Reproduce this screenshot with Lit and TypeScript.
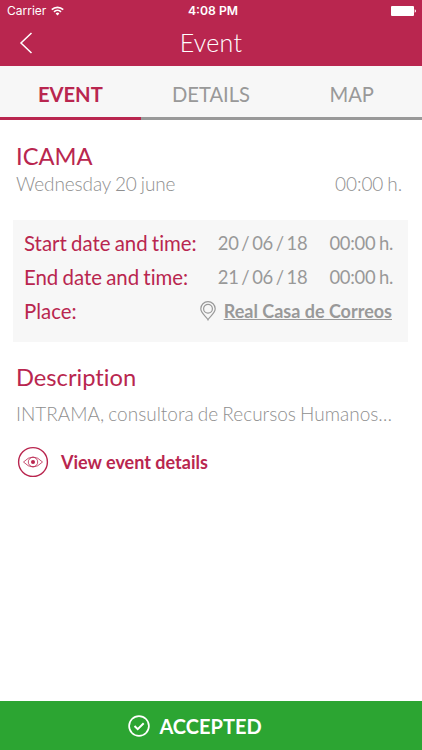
import { LitElement, html, css } from "lit";
import { customElement } from "lit/decorators.js";

@customElement("app-root")
export class AppRoot extends LitElement {
  static styles = css`
    :host { display: flex; flex-direction: column; height: 100vh; background: #fff; font-family: Lato, sans-serif; font-variant-ligatures: none; color: #8f8f8f; white-space: nowrap; overflow: hidden; }
    * { box-sizing: border-box; }
    svg { display: block; fill: none; stroke: currentColor; flex: none; }
    .status { height: 22px; background: #b9264f; color: #fff; display: grid; grid-template-columns: 1fr auto 1fr; align-items: center; padding: 0 6px 0 7px; font: 12px/22px Inter, sans-serif; }
    .carrier { display: flex; align-items: center; gap: 5px; }
    .clock { font-weight: 600; font-size: 12.2px; padding-left: 3px; }
    .battery { justify-self: end; }
    .nav { height: 44px; background: #b9264f; color: #fff; display: grid; grid-template-columns: 52px 1fr 52px; align-items: center; text-align: center; font-size: 25px; font-weight: 300; letter-spacing: 0.3px; padding-bottom: 2px; }
    .title { padding-bottom: 3px; }
    .back { padding-left: 19px; }
    .tabs { display: grid; grid-template: 54px / repeat(3, 1fr); height: 54px; background: #f7f7f7; }
    .tab { height: 54px; border-bottom: 3px solid #999; font-size: 20.2px; line-height: 56px; text-align: center; color: #999; }
    .tab.active { border-color: #b9264f; color: #b9264f; font-weight: 700; }
    .content { flex: 1; padding: 22px 13px 0; }
    h1, h2 { margin: 0 3px; color: #b9264f; font-size: 23.7px; font-weight: 400; line-height: 28px; }
    .sub { display: flex; justify-content: space-between; margin: 2px 7px 0 3px; font-size: 19px; font-weight: 300; line-height: 24px; word-spacing: -1px; letter-spacing: -0.1px; }
    .card { background: #f7f7f7; margin-top: 24px; padding: 6px 15px 0 11px; height: 122px; width: 395px; }
    .row { display: flex; height: 34px; align-items: center; font-size: 20.4px; line-height: 24px; color: #b9264f; word-spacing: -1px; }
    .label { padding-bottom: 1px; }
    .date, .time { font-size: 18.4px; color: #999; word-spacing: -1px; letter-spacing: -0.25px; }
    .date { margin-left: auto; word-spacing: -1.7px; }
    .time { margin-left: 22px; }
    .place { margin: 0 1px 0 auto; display: flex; align-items: center; gap: 8px; font-size: 18px; font-weight: 700; color: #999; word-spacing: 0; }
    .link { text-decoration: underline; }
    h2 { margin-top: 21px; }
    .text { margin: 11px 3px 0; font-size: 19px; font-weight: 300; line-height: 24px; word-spacing: -1px; }
    .details { display: flex; align-items: center; gap: 12px; margin: 20px 4px 0; color: #b9264f; font-size: 18px; font-weight: 700; }
    .accepted { height: 49px; background: #2ca532; color: #fff; display: flex; align-items: center; justify-content: center; gap: 9px; font-size: 20px; font-weight: 700; padding-right: 32px; }
  `;
  render() {
    return html`
      <div class="status">
        <div class="carrier">Carrier
          <svg width="13" height="10" viewBox="0 0 13 10" stroke-width="1.7"><path d="M.8 3.6a8.2 8.2 0 0 1 11.4 0M3 5.9a5 5 0 0 1 7 0"/><path d="M6.5 9.4 4.6 7.5a2.8 2.8 0 0 1 3.8 0z" fill="currentColor" stroke="none"/></svg>
        </div>
        <div class="clock">4:08 PM</div>
        <svg class="battery" width="25" height="10" viewBox="0 0 25 10"><path d="M1 0h21q1 0 1 1v8q0 1-1 1H1q-1 0-1-1V1q0-1 1-1zM23.7 3.3q1.3.5 1.3 1.7t-1.3 1.7z" fill="currentColor" stroke="none"/></svg>
      </div>
      <div class="nav">
        <div class="back"><svg width="14" height="22" viewBox="0 0 14 22" stroke-width="1.5"><path d="M12.5 1 2 11l10.5 10"/></svg></div>
        <div class="title">Event</div>
      </div>
      <div class="tabs"><div class="tab active">EVENT</div><div class="tab">DETAILS</div><div class="tab">MAP</div></div>
      <div class="content">
        <h1>ICAMA</h1>
        <div class="sub"><span>Wednesday 20 june</span><span>00:00 h.</span></div>
        <div class="card">
          <div class="row"><span class="label">Start date and time:</span><span class="date">20 / 06 / 18</span><span class="time">00:00 h.</span></div>
          <div class="row"><span class="label">End date and time:</span><span class="date">21 / 06 / 18</span><span class="time">00:00 h.</span></div>
          <div class="row"><span class="label">Place:</span><span class="place">
            <svg width="16" height="20" viewBox="0 0 16 20" stroke-width="1.2"><path d="M8 18.8C6.5 15.5.8 12.5.8 7.8a7.2 7.2 0 0 1 14.4 0C15.2 12.5 9.5 15.5 8 18.8z"/><circle cx="8" cy="7.8" r="4.4"/></svg>
            <span class="link">Real Casa de Correos</span></span></div>
        </div>
        <h2>Description</h2>
        <div class="text">INTRAMA, consultora de Recursos Humanos…</div>
        <div class="details">
          <svg width="32" height="32" viewBox="0 0 32 32"><circle cx="16" cy="16" r="14.4" stroke-width="1.4"/><path d="M6.5 16Q16 6 25.5 16 16 26 6.500 16z" stroke-width=".8"/><circle cx="16" cy="16" r="4.7" stroke-width=".8"/><circle cx="16" cy="16" r="2" fill="currentColor" stroke="none"/></svg>
          <span>View event details</span>
        </div>
      </div>
      <div class="accepted">
        <svg width="22" height="22" viewBox="0 0 22 22" stroke-width="1.7"><circle cx="11" cy="11" r="9.9"/><path d="m6.5 11 3.2 3.2 6-6" stroke-width="2"/></svg>
        <span>ACCEPTED</span>
      </div>
    `;
  }
}
